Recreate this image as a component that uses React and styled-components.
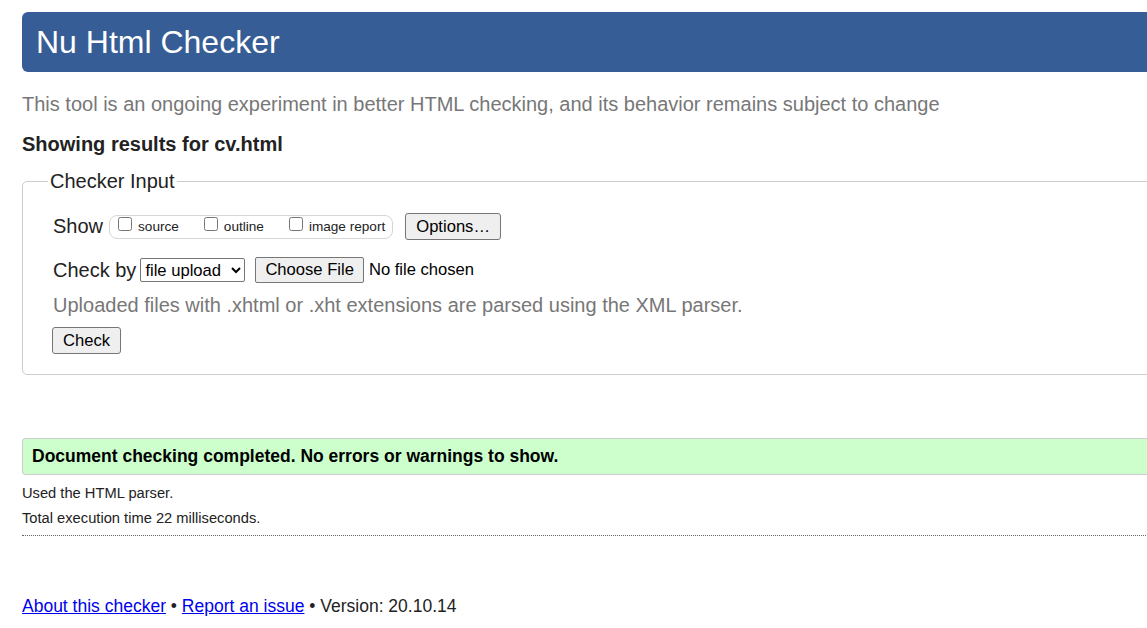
import React from "react";
import styled, { createGlobalStyle } from "styled-components";

const Global = createGlobalStyle`
  html, body { margin: 0; padding: 0; background: #fff; overflow: hidden; }
  body { font-family: "Liberation Sans", Arial, sans-serif; color: #222; }
`;

const Page = styled.div`
  width: 1200px;
  padding: 12px 0 0 22px;
`;

const Header = styled.h1`
  margin: 0;
  height: 60px;
  line-height: 60px;
  padding-left: 14px;
  background: #365d95;
  color: #fff;
  font-size: 32px;
  font-weight: normal;
  border-radius: 6px 0 0 6px;
`;

const Lede = styled.p`
  margin: 21px 0 0;
  font-size: 20px;
  line-height: 23px;
  color: #777;
`;

const ResultsFor = styled.h2`
  margin: 17px 0 0;
  font-size: 20px;
  line-height: 23px;
  font-weight: bold;
  color: #222;
`;

const Fieldset = styled.fieldset`
  margin: 14px 0 0;
  padding: 0 0 20px 30px;
  border: 1px solid #ccc;
  border-radius: 5px 0 0 5px;
  min-width: 0;
`;

const Legend = styled.legend`
  margin-left: -5px;
  padding: 0 2px;
  font-size: 20px;
  line-height: 23px;
  color: #222;
`;

const Row = styled.div`
  display: flex;
  align-items: center;
  margin-top: ${(p) => p.$top}px;
  font-size: 20px;
  color: #222;
`;

const RowLabel = styled.span`
  margin-right: ${(p) => p.$gap}px;
`;

const Group = styled.div`
  display: flex;
  align-items: center;
  height: 22px;
  padding: 0 7px 0 8px;
  border: 1px solid #d6d6d6;
  border-radius: 8px;
  margin-right: 12px;
`;

const CheckItem = styled.label`
  display: flex;
  align-items: center;
  margin-right: ${(p) => (p.$last ? 0 : 25)}px;
  font-size: 13.6px;
  color: #222;
  input {
    margin: 0 6px 0 0;
    width: 14px;
    height: 14px;
    position: relative;
    top: -3px;
  }
`;

const Button = styled.button`
  font-family: "Liberation Sans", Arial, sans-serif;
  font-size: 16.6px;
  height: 27px;
  padding: 0 10px;
  color: #000;
  background: #efefef;
  border: 1px solid #767676;
  border-radius: 3px;
`;

const Select = styled.select`
  font-family: "Liberation Sans", Arial, sans-serif;
  font-size: 16.6px;
  height: 24px;
  width: 105px;
  margin-right: 10px;
  color: #000;
  background: #fff;
  border: 1px solid #767676;
  border-radius: 2px;
`;

const FileInput = styled.input`
  font-family: "Liberation Sans", Arial, sans-serif;
  font-size: 16.6px;
  color: #000;
  &::file-selector-button {
    font-family: "Liberation Sans", Arial, sans-serif;
    font-size: 16.6px;
    height: 26px;
    padding: 0 9px;
    margin-right: 5px;
    background: #efefef;
    border: 1px solid #767676;
    border-radius: 2px;
    color: #000;
  }
`;

const Hint = styled.p`
  margin: 11px 0 0;
  font-size: 20px;
  line-height: 23px;
  color: #777;
`;

const CheckButton = styled(Button)`
  margin-top: 10px;
  margin-left: -1px;
  display: block;
`;

const Success = styled.div`
  margin-top: 63px;
  height: 35px;
  line-height: 35px;
  padding-left: 9px;
  background: #ccffcc;
  border: 1px solid #ccc;
  border-right: none;
  border-radius: 4px 0 0 4px;
  font-size: 17.5px;
  font-weight: bold;
  color: #000;
`;

const Note = styled.p`
  margin: ${(p) => p.$top}px 0 0;
  font-size: 14.7px;
  line-height: 17px;
  color: #222;
`;

const Rule = styled.hr`
  margin: 8px 0 0;
  border: none;
  border-top: 1px dotted #666;
  height: 0;
`;

const Footer = styled.p`
  margin: 60px 0 0;
  font-size: 17.5px;
  line-height: 20px;
  color: #222;
  a { color: #0000ee; text-decoration: underline; }
`;

export default function App() {
  return (
    <>
      <Global />
      <Page>
        <Header>Nu Html Checker</Header>
        <Lede>
          This tool is an ongoing experiment in better HTML checking, and its
          behavior remains subject to change
        </Lede>
        <ResultsFor>Showing results for cv.html</ResultsFor>
        <Fieldset>
          <Legend>Checker Input</Legend>
          <Row $top={20}>
            <RowLabel $gap={6}>Show</RowLabel>
            <Group>
              <CheckItem>
                <input type="checkbox" />
                source
              </CheckItem>
              <CheckItem>
                <input type="checkbox" />
                outline
              </CheckItem>
              <CheckItem $last>
                <input type="checkbox" />
                image report
              </CheckItem>
            </Group>
            <Button type="button">Options…</Button>
          </Row>
          <Row $top={17}>
            <RowLabel $gap={4}>Check by</RowLabel>
            <Select defaultValue="file">
              <option value="address">address</option>
              <option value="file">file upload</option>
              <option value="text">text input</option>
            </Select>
            <FileInput type="file" />
          </Row>
          <Hint>
            Uploaded files with .xhtml or .xht extensions are parsed using the
            XML parser.
          </Hint>
          <CheckButton type="button">Check</CheckButton>
        </Fieldset>
        <Success>Document checking completed. No errors or warnings to show.</Success>
        <Note $top={10}>Used the HTML parser.</Note>
        <Note $top={8}>Total execution time 22 milliseconds.</Note>
        <Rule />
        <Footer>
          <a href="#about">About this checker</a> •{" "}
          <a href="#issue">Report an issue</a> • Version: 20.10.14
        </Footer>
      </Page>
    </>
  );
}
